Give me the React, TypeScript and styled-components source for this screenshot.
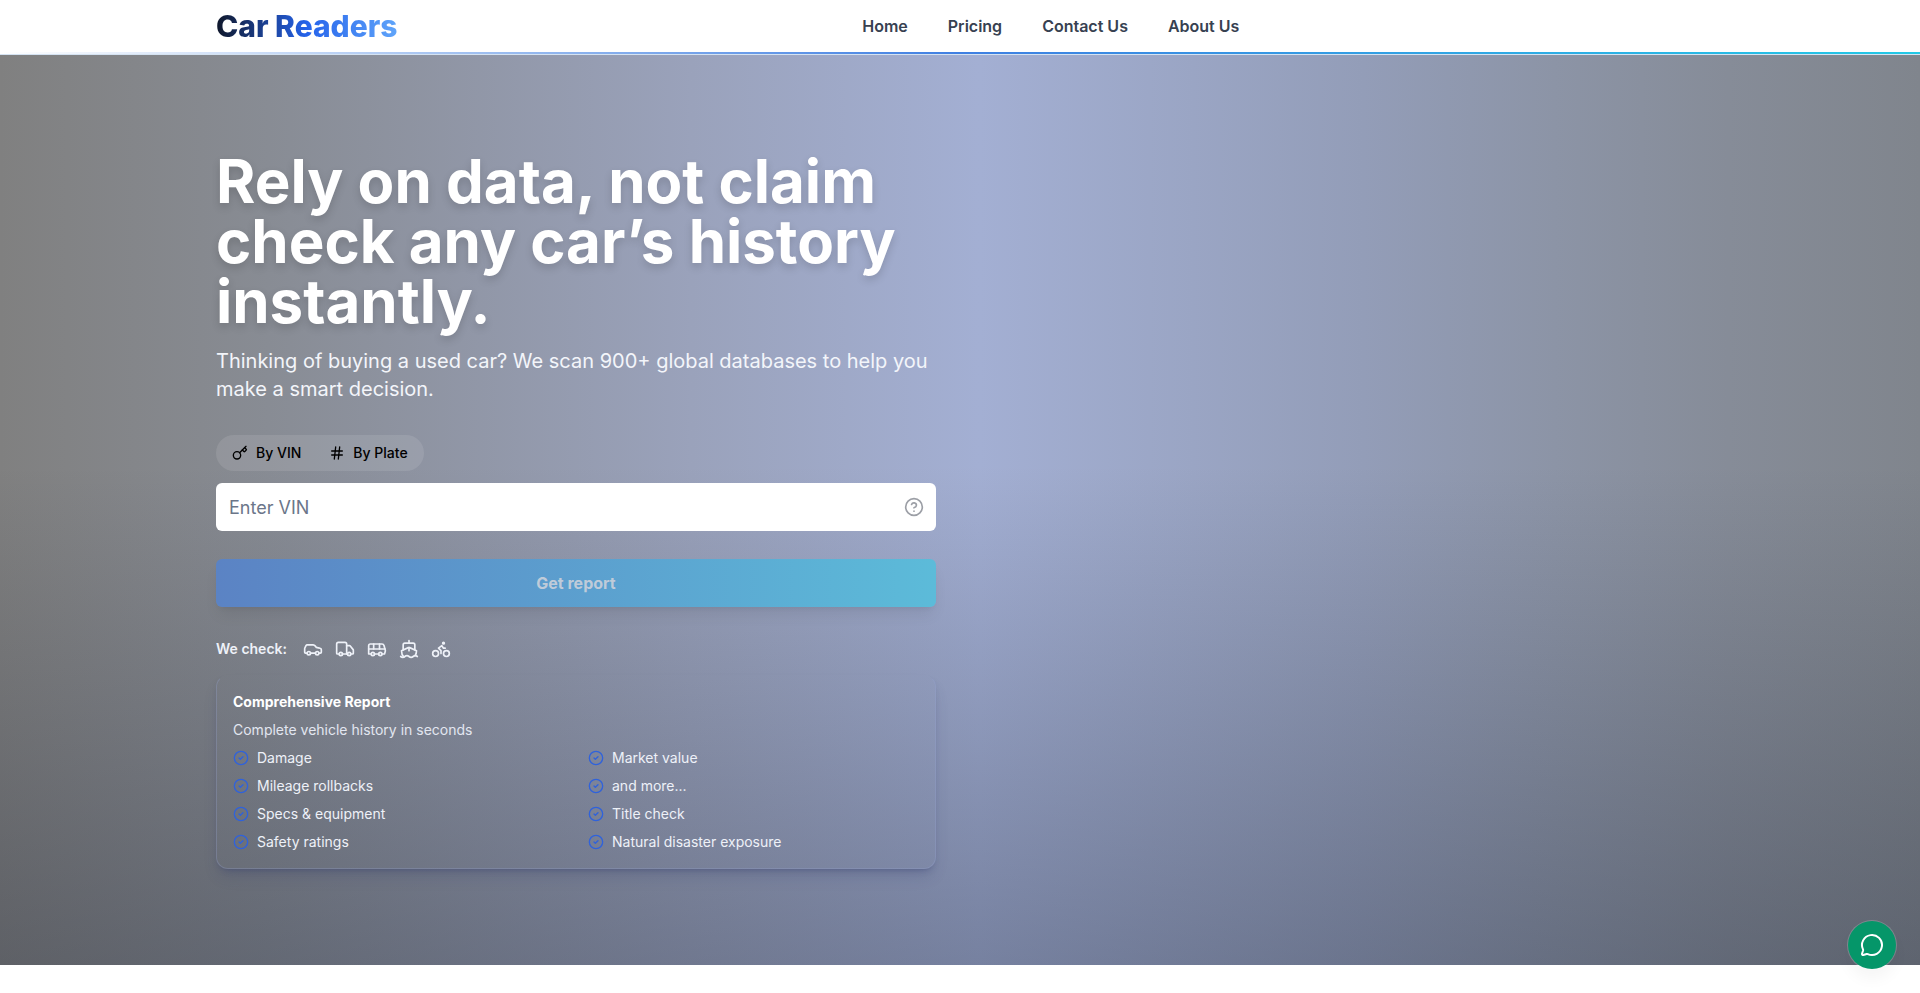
import React from "react";
import styled, { createGlobalStyle } from "styled-components";
import {
  Bike,
  Bus,
  Car,
  CircleCheck,
  CircleHelp,
  Hash,
  Key,
  MessageCircle,
  Ship,
  Truck,
} from "lucide-react";

const GlobalStyle = createGlobalStyle`
  *, *::before, *::after { box-sizing: border-box; }
  body {
    margin: 0;
    background: #ffffff;
    color: #0f172a;
    font-family: Inter, "Liberation Sans", sans-serif;
  }
  h1, h2, p, ul { margin: 0; padding: 0; }
  ul { list-style: none; }
  button, input { font-family: inherit; }
`;

const Container = styled.div`
  width: 100%;
  max-width: 1536px;
  margin: 0 auto;
  padding: 0 24px;
`;

const Header = styled.header`
  background: #ffffff;
  border-bottom: 1px solid #d5e3f2;
`;

const HeaderRow = styled(Container)`
  display: flex;
  align-items: center;
  height: 52px;
`;

const HeaderLine = styled.div`
  height: 2px;
  background: linear-gradient(to right, rgba(59, 130, 246, 0), #3f7fe2 50%, #22c9e6);
`;

const Logo = styled.a`
  font-size: 30px;
  line-height: 36px;
  font-weight: 800;
  text-decoration: none;
  color: transparent;
  background: linear-gradient(to right, #0f172a, #2563eb 50%, #60a5fa);
  background-clip: text;
`;

const Nav = styled.nav`
  flex: 1;
  display: flex;
  justify-content: center;
  gap: 40px;
`;

const NavLink = styled.a`
  font-size: 16px;
  line-height: 24px;
  font-weight: 600;
  color: #374151;
  text-decoration: none;
`;

const Hero = styled.section`
  padding: 96px 0;
  background:
    linear-gradient(to bottom, rgba(15, 23, 42, 0) 45%, rgba(15, 23, 42, 0.3)),
    linear-gradient(to right, #808080 0%, #888c94 14%, #9aa2bb 36%, #a3afd3 51%, #939db8 71%, #8c94a6 81%, #868c98 90%, #80858d 100%);
`;

const HeroGrid = styled(Container)`
  display: grid;
  grid-template-columns: 1fr 1fr;
  column-gap: 48px;
`;

const Title = styled.h1`
  font-size: 60px;
  line-height: 60px;
  font-weight: 700;
  color: #ffffff;
  text-shadow: 0 4px 8px rgba(0, 0, 0, 0.15);
`;

const Lead = styled.p`
  margin-top: 16px;
  font-size: 20px;
  line-height: 28px;
  color: #f3f5fa;
`;

const Tabs = styled.div`
  display: inline-flex;
  margin-top: 32px;
  border-radius: 18px;
  background: rgba(255, 255, 255, 0.1);
`;

const Tab = styled.button`
  display: flex;
  align-items: center;
  gap: 8px;
  height: 36px;
  padding: 0 16px;
  border: 0;
  background: transparent;
  color: #000000;
  font-size: 14px;
  line-height: 20px;
  font-weight: 500;

  & + & {
    padding-left: 12px;
  }
`;

const Field = styled.div`
  display: flex;
  align-items: center;
  height: 48px;
  margin-top: 12px;
  padding: 0 12px 0 13px;
  border-radius: 6px;
  background: #ffffff;
`;

const VinInput = styled.input`
  flex: 1;
  min-width: 0;
  height: 48px;
  padding: 1px 0 0;
  border: 0;
  outline: 0;
  background: transparent;
  color: #0f172a;
  font-size: 18px;
  line-height: 28px;

  &::placeholder {
    color: #6b7689;
    opacity: 1;
  }
`;

const HelpButton = styled.button`
  display: flex;
  padding: 0;
  border: 0;
  background: transparent;
  color: #9c9fa6;
`;

const SubmitButton = styled.button`
  display: block;
  width: 100%;
  height: 48px;
  margin-top: 28px;
  border: 0;
  border-radius: 6px;
  background: linear-gradient(to right, #5b83c4, #5cbbd9);
  box-shadow: 0 10px 15px -3px rgba(0, 0, 0, 0.08), 0 4px 6px -4px rgba(0, 0, 0, 0.08);
  color: #bfcbd9;
  font-size: 16px;
  line-height: 24px;
  font-weight: 700;
`;

const Checks = styled.div`
  display: flex;
  align-items: center;
  gap: 16px;
  margin-top: 32px;
  color: #eef1f8;
  font-size: 14px;
  line-height: 20px;
  font-weight: 600;
`;

const VehicleIcons = styled.div`
  display: flex;
  gap: 12px;
`;

const Card = styled.div`
  margin-top: 16px;
  padding: 16px;
  border: 1px solid rgba(148, 163, 210, 0.3);
  border-top-color: transparent;
  border-radius: 12px;
  box-shadow: 0 10px 15px -3px rgba(50, 60, 110, 0.2), 0 4px 6px -4px rgba(50, 60, 110, 0.5);
  color: #e2e6f0;
  font-size: 14px;
  line-height: 20px;
`;

const CardTitle = styled.h2`
  color: #ffffff;
  font-size: 14px;
  line-height: 20px;
  font-weight: 700;
`;

const CardText = styled.p`
  margin-top: 8px;
`;

const Features = styled.ul`
  display: grid;
  grid-template-columns: 1fr 1fr;
  gap: 8px 24px;
  margin-top: 8px;
`;

const Feature = styled.li`
  display: flex;
  align-items: center;
  gap: 8px;
  color: #eef1f8;

  svg {
    color: #2f62dc;
  }
`;

const ChatButton = styled.button`
  position: fixed;
  right: 24px;
  bottom: 24px;
  display: flex;
  align-items: center;
  justify-content: center;
  width: 48px;
  height: 48px;
  padding: 0;
  border: 0;
  border-radius: 50%;
  background: #059669;
  box-shadow: 0 0 0 1px rgba(255, 255, 255, 0.2), 0 10px 15px rgba(0, 0, 0, 0.04);
  color: #ffffff;
`;

const navItems = ["Home", "Pricing", "Contact Us", "About Us"];
const vehicles = [Car, Truck, Bus, Ship, Bike];
const features = [
  "Damage",
  "Market value",
  "Mileage rollbacks",
  "and more...",
  "Specs & equipment",
  "Title check",
  "Safety ratings",
  "Natural disaster exposure",
];

export default function App() {
  return (
    <>
      <GlobalStyle />
      <Header>
        <HeaderRow>
          <Logo href="#">Car Readers</Logo>
          <Nav>
            {navItems.map((item) => (
              <NavLink href="#" key={item}>{item}</NavLink>
            ))}
          </Nav>
        </HeaderRow>
        <HeaderLine />
      </Header>
      <Hero>
        <HeroGrid>
          <div>
            <Title>Rely on data, not claim check any car’s history instantly.</Title>
            <Lead>
              Thinking of buying a used car? We scan 900+ global databases to help you make a smart decision.
            </Lead>
            <form onSubmit={(e) => e.preventDefault()}>
              <Tabs>
                <Tab type="button"><Key size={16} />By VIN</Tab>
                <Tab type="button"><Hash size={16} />By Plate</Tab>
              </Tabs>
              <Field>
                <VinInput type="text" placeholder="Enter VIN" aria-label="Enter VIN" />
                <HelpButton type="button" aria-label="Help"><CircleHelp size={20} /></HelpButton>
              </Field>
              <SubmitButton type="submit" disabled>Get report</SubmitButton>
            </form>
            <Checks>
              We check:
              <VehicleIcons>
                {vehicles.map((Icon, i) => <Icon size={20} key={i} />)}
              </VehicleIcons>
            </Checks>
            <Card>
              <CardTitle>Comprehensive Report</CardTitle>
              <CardText>Complete vehicle history in seconds</CardText>
              <Features>
                {features.map((text) => (
                  <Feature key={text}><CircleCheck size={16} />{text}</Feature>
                ))}
              </Features>
            </Card>
          </div>
        </HeroGrid>
      </Hero>
      <ChatButton type="button" aria-label="Chat"><MessageCircle size={24} /></ChatButton>
    </>
  );
}
